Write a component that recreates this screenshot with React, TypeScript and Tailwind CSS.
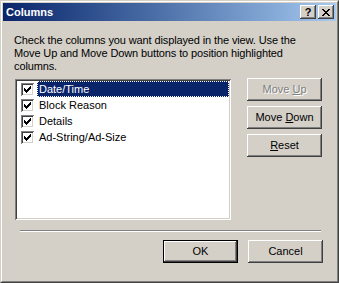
import React from 'react';

const bevel =
  'shadow-[inset_-1px_-1px_#404040,inset_1px_1px_#ffffff,inset_-2px_-2px_#808080,inset_2px_2px_#d4d0c8]';

const columns = ['Date/Time', 'Block Reason', 'Details', 'Ad-String/Ad-Size'];

function CheckBox() {
  return (
    <div className="w-[13px] h-[13px] shrink-0 bg-white shadow-[inset_1px_1px_#808080,inset_-1px_-1px_#ffffff,inset_2px_2px_#404040,inset_-2px_-2px_#d4d0c8]">
      <svg width="13" height="13" viewBox="0 0 13 13" shapeRendering="crispEdges">
        <polygon points="3,5 5,7 10,2 10,5 5,10 3,8" fill="#000" />
      </svg>
    </div>
  );
}

function Button({
  children,
  isDefault,
  disabled,
}: {
  children: React.ReactNode;
  isDefault?: boolean;
  disabled?: boolean;
}) {
  const face = (
    <div
      className={`flex items-center justify-center bg-[#d4d0c8] ${bevel} ${
        isDefault ? 'w-[73px] h-[21px]' : 'w-[75px] h-[23px]'
      } ${disabled ? 'text-[#808080] [text-shadow:1px_1px_0_#ffffff]' : 'text-black'}`}
    >
      <span>{children}</span>
    </div>
  );
  if (isDefault) {
    return <div className="w-[75px] h-[23px] border border-black">{face}</div>;
  }
  return face;
}

export default function App() {
  return (
    <div className="w-[339px] h-[283px] bg-[#d4d0c8] border border-t-[#d4d0c8] border-l-[#d4d0c8] border-r-[#404040] border-b-[#404040] font-['Liberation_Sans',Arial,sans-serif] text-[11px] text-black">
      <div className="h-full border border-t-white border-l-white border-r-[#808080] border-b-[#808080] p-px flex flex-col">
        {/* title bar */}
        <div className="h-[18px] shrink-0 flex items-center justify-between bg-linear-to-r from-[#0a246a] to-[#a6caf0] pl-[2px] pr-[2px]">
          <span className="text-white font-bold text-[11px] leading-none pl-[1px]">Columns</span>
          <div className="flex gap-[2px]">
            <div className={`w-[16px] h-[14px] bg-[#d4d0c8] ${bevel} flex items-center justify-center`}>
              <span className="font-bold text-[11px] leading-none text-black">?</span>
            </div>
            <div className={`w-[16px] h-[14px] bg-[#d4d0c8] ${bevel} flex items-center justify-center`}>
              <svg width="8" height="7" viewBox="0 0 8 7" shapeRendering="crispEdges">
                <path d="M0 0h2v1h1v1h2v-1h1v-1h2v1h-1v1h-1v1h-1v1h1v1h1v1h1v1h-2v-1h-1v-1h-2v1h-1v1h-2v-1h1v-1h1v-1h1v-1h-1v-1h-1v-1h-1z" fill="#000" />
              </svg>
            </div>
          </div>
        </div>

        {/* body */}
        <div className="flex flex-col pl-[11px] pr-[13px] pt-[13px]">
          <p className="leading-[13px] w-[300px] tracking-[-0.12px]">
            Check the columns you want displayed in the view. Use the Move Up and Move Down buttons to position highlighted columns.
          </p>

          <div className="flex items-start mt-[5px] pl-px">
            <div className="w-[216px] h-[141px] mt-px bg-white shadow-[inset_1px_1px_#808080,inset_-1px_-1px_#ffffff,inset_2px_2px_#404040,inset_-2px_-2px_#d4d0c8] p-[2px] flex flex-col">
              {columns.map((c, i) => (
                <div key={c} className="h-[16px] flex items-center pl-[4px]">
                  <CheckBox />
                  <div
                    className={`ml-[3px] flex-1 h-[16px] flex items-center pl-[2px] ${
                      i === 0 ? 'bg-[#0a246a] text-white outline-1 outline-dotted outline-offset-[-1px] outline-white' : ''
                    }`}
                  >
                    {c}
                  </div>
                </div>
              ))}
            </div>

            <div className="flex flex-col gap-[5px] ml-[16px]">
              <Button disabled>
                Move <span className="underline">U</span>p
              </Button>
              <Button>
                Move <span className="underline">D</span>own
              </Button>
              <Button>
                <span className="underline">R</span>eset
              </Button>
            </div>
          </div>

          <div className="ml-[6px] mr-[2px] mt-[10px] h-[2px] border-t border-t-[#808080] border-b border-b-white" />

          <div className="flex justify-end gap-[10px] mt-[8px]">
            <Button isDefault>OK</Button>
            <Button>Cancel</Button>
          </div>
        </div>
      </div>
    </div>
  );
}
